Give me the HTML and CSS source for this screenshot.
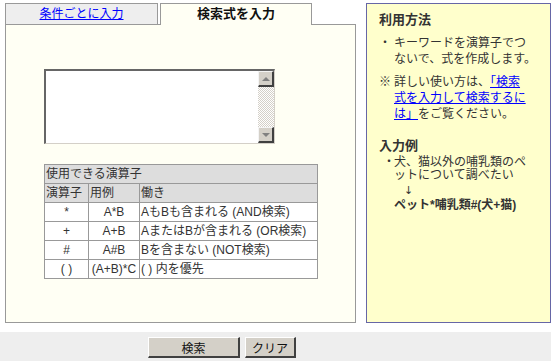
FILE: index.html
```html
<!DOCTYPE html>
<html lang="ja">
<head>
  <meta charset="UTF-8">
  <title>検索式を入力</title>
  <link rel="stylesheet" href="styles.css">
</head>
<body>
  <div class="main">
    <div class="search">
      <ul class="tabs">
        <li class="tab"><a href="#">条件ごとに入力</a></li>
        <li class="tab active">検索式を入力</li>
      </ul>
      <div class="panel">
        <div class="editor">
          <textarea></textarea>
          <div class="scrollbar">
            <span class="sb-btn"><i class="arrow-up"></i></span>
            <span class="sb-track"></span>
            <span class="sb-btn"><i class="arrow-down"></i></span>
          </div>
        </div>
        <table class="ops">
          <colgroup>
            <col class="c1">
            <col class="c2">
            <col class="c3">
          </colgroup>
          <tr>
            <th colspan="3">使用できる演算子</th>
          </tr>
          <tr>
            <th>演算子</th>
            <th>用例</th>
            <th>働き</th>
          </tr>
          <tr>
            <td class="mid">*</td>
            <td class="mid">A*B</td>
            <td>AもBも含まれる (AND検索)</td>
          </tr>
          <tr>
            <td class="mid">+</td>
            <td class="mid">A+B</td>
            <td>AまたはBが含まれる (OR検索)</td>
          </tr>
          <tr>
            <td class="mid">#</td>
            <td class="mid">A#B</td>
            <td>Bを含まない (NOT検索)</td>
          </tr>
          <tr>
            <td class="mid">( )</td>
            <td class="mid">(A+B)*C</td>
            <td>( ) 内を優先</td>
          </tr>
        </table>
      </div>
    </div>

    <div class="help">
      <h3>利用方法</h3>
      <div class="item first">
        <span class="mark">・</span>
        <span class="txt">キーワードを演算子でつ<br>ないで、式を作成します。</span>
      </div>
      <div class="item note">
        <span class="mark">※</span>
        <span class="txt">詳しい使い方は、<a href="#">「検索<br>式を入力して検索するに<br>は」</a>をご覧ください。</span>
      </div>
      <h3 class="example-title">入力例</h3>
      <div class="item example">
        <span class="mark">・</span>
        <span class="txt">犬、猫以外の哺乳類のペ<br>ットについて調べたい</span>
      </div>
      <div class="arrow">↓</div>
      <div class="formula">ペット*哺乳類#(犬+猫)</div>
    </div>
  </div>

  <div class="footer">
    <button class="btn btn-search">検索</button>
    <button class="btn btn-clear">クリア</button>
  </div>
</body>
</html>
```

FILE: styles.css
```css
body {
  margin: 0;
  font-family: "Liberation Sans", "Noto Sans CJK JP", sans-serif;
  font-size: 12px;
  color: #333;
  background: #fff;
}

.main {
  display: flex;
  gap: 10px;
  padding: 3px 0 0 5px;
}

/* left side: tabs + panel */
.search {
  width: 351px;
}

.tabs {
  display: flex;
  align-items: flex-start;
  gap: 2px;
  list-style: none;
  margin: 0;
  padding: 0;
  height: 21px;
}

.tab {
  box-sizing: border-box;
  width: 153px;
  height: 21px;
  border: 1px solid #999;
  border-bottom: none;
  background: #eee;
  text-align: center;
  line-height: 20px;
  font-size: 12px;
}

.tab a {
  color: #0000ff;
}

.tab.active {
  position: relative;
  width: 152px;
  height: 22px;
  background: #fffff4;
  font-weight: bold;
  font-size: 13px;
  color: #111;
}

.panel {
  box-sizing: border-box;
  height: 299px;
  border: 1px solid #999;
  background: #fffff4;
  padding: 44px 0 0 38px;
}

.editor {
  box-sizing: border-box;
  display: flex;
  width: 231px;
  height: 75px;
  margin-bottom: 20px;
  border-top: 2px solid #666;
  border-left: 2px solid #666;
  border-right: 1px solid #d4d0c8;
  border-bottom: 1px solid #d4d0c8;
  background: #fff;
}

.editor textarea {
  flex: 1;
  border: none;
  outline: none;
  resize: none;
  padding: 0;
  margin: 0;
  background: #fff;
}

.scrollbar {
  display: flex;
  flex-direction: column;
  width: 16px;
}

.sb-btn {
  box-sizing: border-box;
  display: flex;
  align-items: center;
  justify-content: center;
  height: 16px;
  background: #d4d0c8;
  border-top: 1px solid #f4f4f4;
  border-left: 1px solid #f4f4f4;
  border-right: 2px solid #404040;
  border-bottom: 2px solid #404040;
}

.sb-track {
  flex: 1;
  background: repeating-conic-gradient(#d4d0c8 0 25%, #fff 0 50%) 0 0 / 2px 2px;
}

.arrow-up,
.arrow-down {
  width: 0;
  height: 0;
  border-left: 4px solid transparent;
  border-right: 4px solid transparent;
}

.arrow-up {
  border-bottom: 4px solid #808080;
}

.arrow-down {
  border-top: 4px solid #808080;
}

/* operator table */
.ops {
  border-collapse: collapse;
  width: 274px;
  table-layout: fixed;
}

.ops .c1 {
  width: 44px;
}

.ops .c2 {
  width: 51px;
}

.ops th,
.ops td {
  border: 1px solid #999;
  height: 18px;
  padding: 0 1px;
  line-height: 18px;
  font-size: 12px;
  font-weight: normal;
  text-align: left;
  white-space: nowrap;
  overflow: hidden;
}

.ops th {
  background: #ddd;
}

.ops td {
  background: #fff;
}

.ops .mid {
  text-align: center;
}

/* right side: help box */
.help {
  box-sizing: border-box;
  width: 185px;
  height: 320px;
  border: 1px solid #6666a6;
  background: #ffffcc;
  padding: 8px 8px 0 12px;
}

.help h3 {
  margin: 0;
  font-size: 13px;
  line-height: 16px;
  color: #333;
}

.help a {
  color: #0000ff;
}

.item {
  display: flex;
  line-height: 16px;
  white-space: nowrap;
}

.item .mark {
  width: 15px;
  flex-shrink: 0;
}

.item .txt {
  flex: 1;
}

.item.first {
  margin-top: 7px;
}

.item.note {
  margin-top: 7px;
}

.help .example-title {
  margin-top: 16px;
}

.item.example {
  margin-top: 2px;
  line-height: 13px;
}

.item.example .mark {
  padding-left: 4px;
  width: 11px;
}

.arrow {
  padding-left: 25px;
  line-height: 18px;
  font-family: "DejaVu Sans", sans-serif;
  font-size: 11px;
}

.formula {
  padding-left: 15px;
  line-height: 10px;
  font-weight: bold;
}

/* bottom bar */
.footer {
  display: flex;
  gap: 5px;
  margin-top: 9px;
  height: 29px;
  box-sizing: border-box;
  padding: 5px 0 0 148px;
  background: #eee;
}

.btn {
  box-sizing: border-box;
  height: 21px;
  padding: 0;
  font-family: "Liberation Sans", "Noto Sans CJK JP", sans-serif;
  font-size: 12px;
  color: #111;
  background: #d4d0c8;
  border-top: 1px solid #fff;
  border-left: 1px solid #fff;
  border-right: 2px solid #404040;
  border-bottom: 2px solid #404040;
}

.btn-search {
  width: 92px;
}

.btn-clear {
  width: 51px;
}
```
